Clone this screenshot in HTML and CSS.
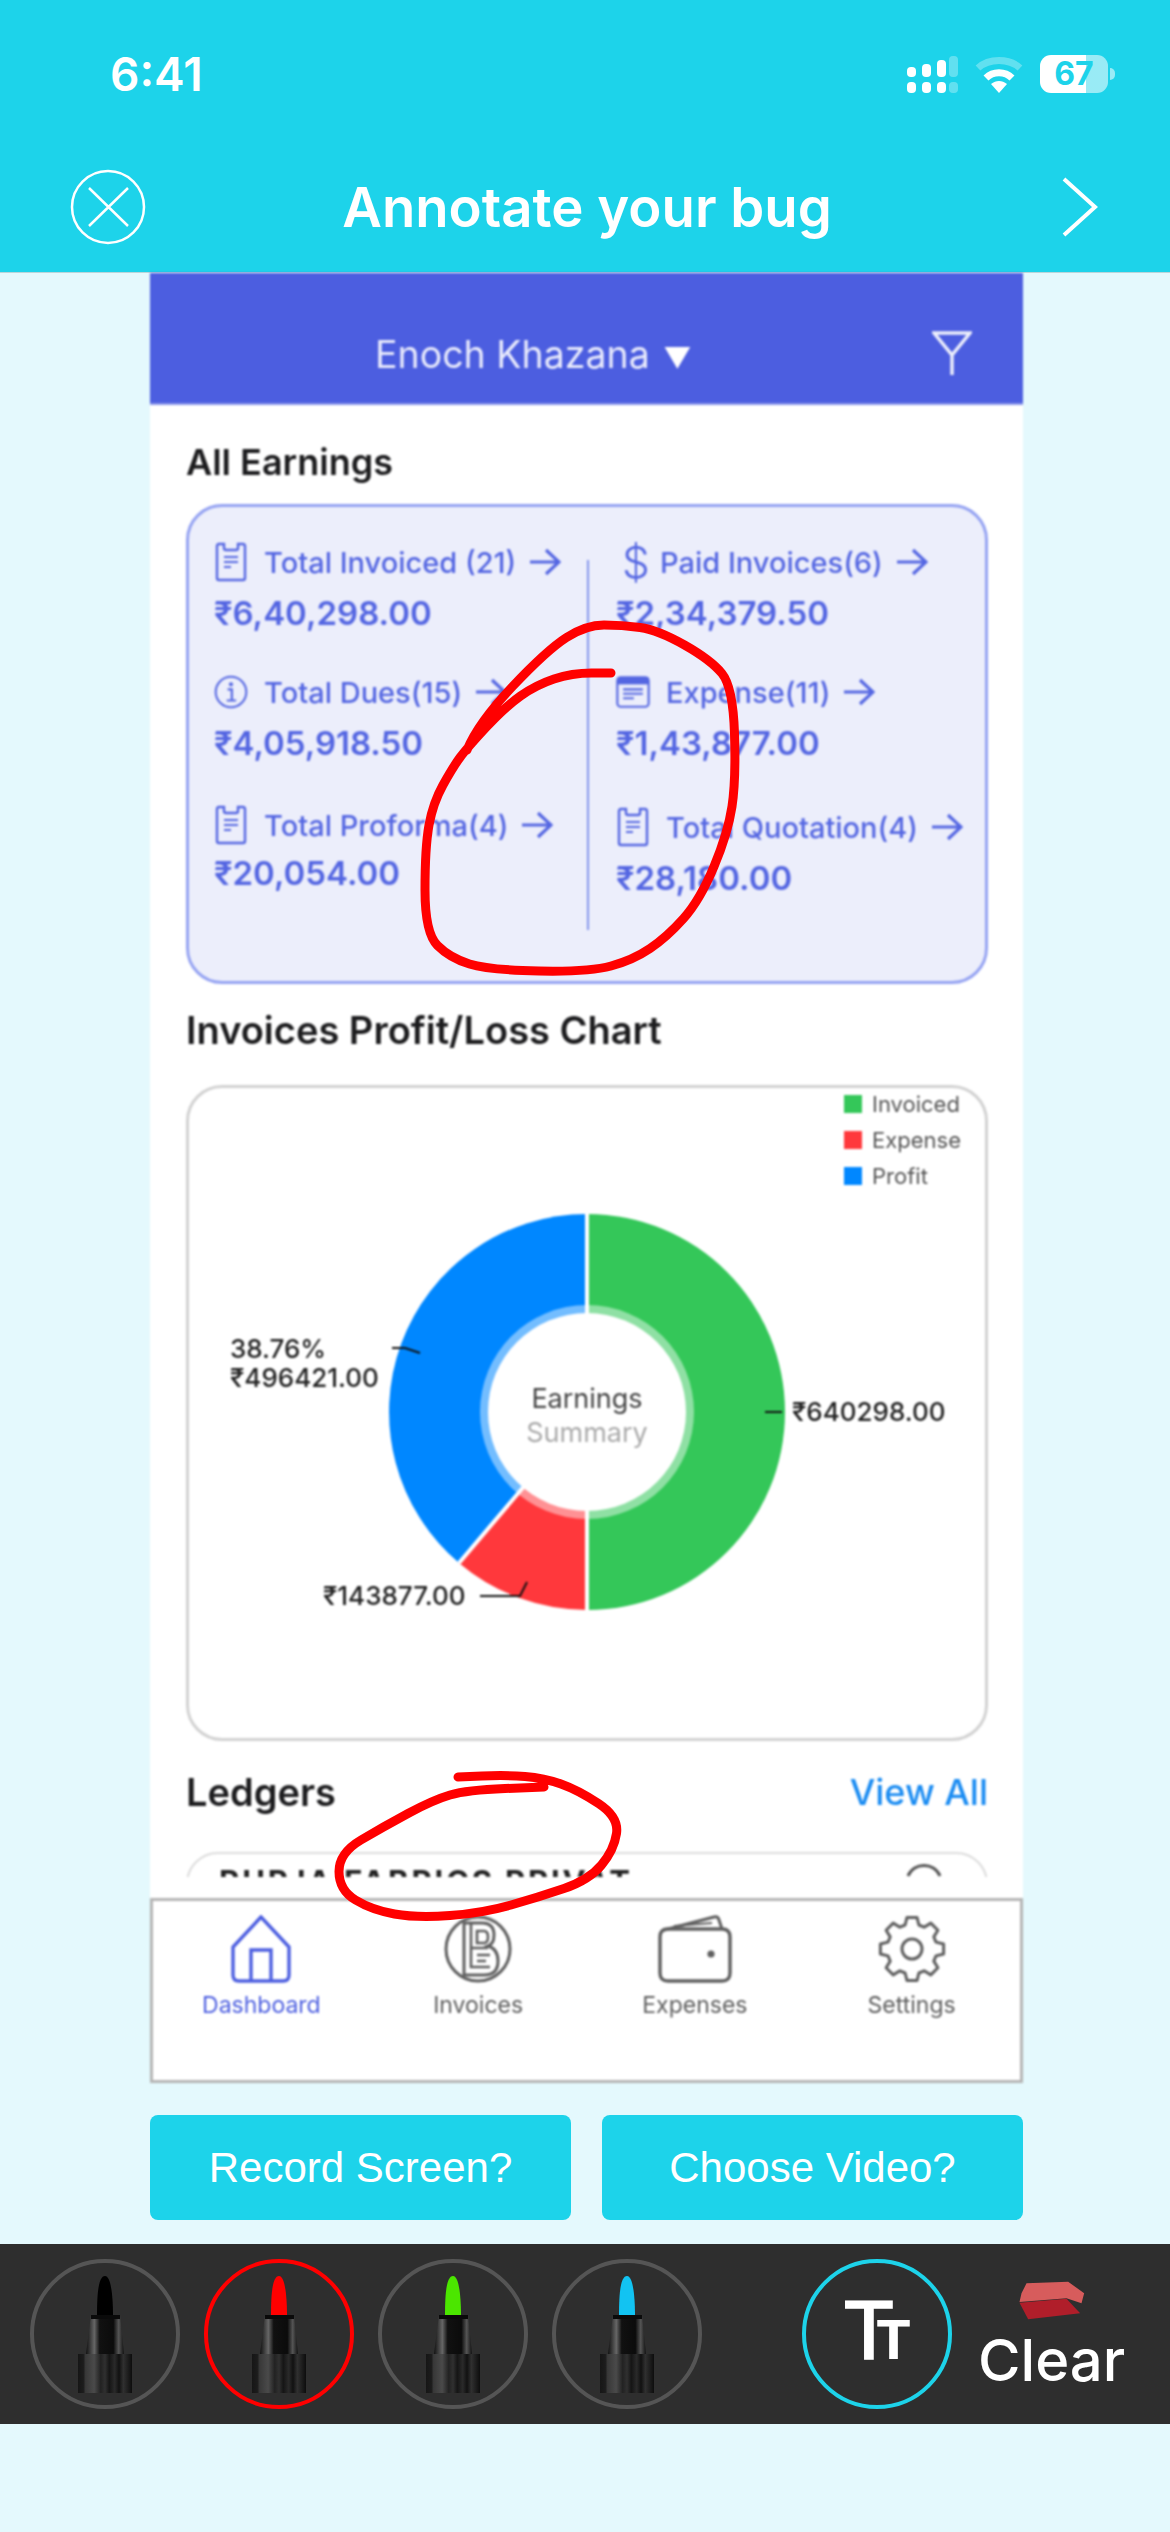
FILE: index.html
```html
<!DOCTYPE html>
<html lang="en">
<head>
  <meta charset="UTF-8">
  <meta name="viewport" content="width=device-width, initial-scale=1.0">
  <title>Annotate your bug</title>
  <link rel="stylesheet" href="styles.css">
</head>
<body>

  <svg width="0" height="0" class="defs">
    <defs>
      <symbol id="clipboard" viewBox="0 0 32 40">
        <path d="M9 2H4Q2 2 2 4V36Q2 38 4 38H28Q30 38 30 36V4Q30 2 28 2H23V6Q23 8 21 8H11Q9 8 9 6Z" fill="none" stroke="currentColor" stroke-width="2.4"/>
        <path d="M9 15H23M9 20H23M9 25H16" fill="none" stroke="currentColor" stroke-width="2"/>
      </symbol>
      <symbol id="arrow" viewBox="0 0 32 28">
        <path d="M1 14H29M17 2L30 14L17 26" fill="none" stroke="currentColor" stroke-width="3.2"/>
      </symbol>
      <linearGradient id="collar" x1="0" x2="1" y1="0" y2="0">
        <stop offset="0" stop-color="#111"/>
        <stop offset=".22" stop-color="#666"/>
        <stop offset=".36" stop-color="#111"/>
        <stop offset=".72" stop-color="#0b0b0b"/>
        <stop offset=".86" stop-color="#555"/>
        <stop offset="1" stop-color="#111"/>
      </linearGradient>
      <linearGradient id="cap" x1="0" x2="1" y1="0" y2="0">
        <stop offset="0" stop-color="#161616"/>
        <stop offset=".1" stop-color="#1c1c1c"/>
        <stop offset=".14" stop-color="#383838"/>
        <stop offset=".3" stop-color="#4a4a4a"/>
        <stop offset=".42" stop-color="#222"/>
        <stop offset=".5" stop-color="#303030"/>
        <stop offset=".58" stop-color="#151515"/>
        <stop offset=".68" stop-color="#2a2a2a"/>
        <stop offset=".76" stop-color="#111"/>
        <stop offset=".84" stop-color="#303030"/>
        <stop offset="1" stop-color="#0d0d0d"/>
      </linearGradient>
      <symbol id="pen" viewBox="0 0 54 117">
        <path d="M19 40C19 20 20 0 27 0C33 0 35 20 35 40Z" fill="currentColor"/>
        <path d="M13 39H42L46 78H8Z" fill="url(#collar)"/>
        <rect x="13" y="39" width="29" height="4" fill="#0a0a0a"/>
        <rect x="0" y="78" width="54" height="39" fill="url(#cap)"/>
      </symbol>
    </defs>
  </svg>

  <header class="top">
    <div class="status">
      <span class="clock">6:41</span>
      <div class="status-icons">
        <svg width="51" height="37" viewBox="0 0 51 37">
          <g fill="#fff">
            <rect x="0" y="11" width="9" height="10" rx="4"/><rect x="15" y="8" width="9" height="13" rx="4"/><rect x="30" y="4" width="9" height="17" rx="4"/>
            <rect x="0" y="26" width="9" height="11" rx="4"/><rect x="15" y="26" width="9" height="11" rx="4"/><rect x="30" y="26" width="9" height="11" rx="4"/>
          </g>
          <g fill="#fff" opacity=".3">
            <rect x="42" y="0" width="9" height="21" rx="4"/><rect x="42" y="26" width="9" height="11" rx="4"/>
          </g>
        </svg>
        <svg width="48" height="37" viewBox="0 0 48 37">
          <path d="M3 12C14 2 34 2 45 12" fill="none" stroke="#fff" stroke-opacity=".3" stroke-width="7"/>
          <path d="M11 22C18 15 30 15 37 22" fill="none" stroke="#fff" stroke-width="7"/>
          <path d="M24 37L16 28C21 24 27 24 32 28Z" fill="#fff"/>
        </svg>
        <div class="battery">67</div>
      </div>
    </div>
    <div class="title-row">
      <svg width="76" height="76" viewBox="0 0 76 76">
        <circle cx="38" cy="38" r="36" fill="none" stroke="#fff" stroke-width="2.5"/>
        <path d="M19 19L58 57M58 19L19 57" fill="none" stroke="#fff" stroke-width="2.5"/>
      </svg>
      <h1>Annotate your bug</h1>
      <svg class="next" width="36" height="60" viewBox="0 0 36 60">
        <path d="M2 2L33 30L2 58" fill="none" stroke="#fff" stroke-width="4"/>
      </svg>
    </div>
  </header>

  <main class="screen">
    <div class="app-bar">
      <span class="account">Enoch Khazana <span class="caret">▼</span></span>
      <svg class="filter" width="40" height="46" viewBox="0 0 40 46">
        <path d="M2 2H38L20 24Z M20 24V44" fill="none" stroke="#fff" stroke-width="3.5" opacity=".9"/>
      </svg>
    </div>

    <div class="scroll">
      <h2 class="section-title first">All Earnings</h2>
      <section class="stats">
        <div class="stat">
          <div class="stat-label"><svg class="stat-icon" viewBox="0 0 32 40"><use href="#clipboard"/></svg>Total Invoiced (21)<svg class="stat-arrow"><use href="#arrow"/></svg></div>
          <div class="stat-value">₹6,40,298.00</div>
        </div>
        <div class="stat">
          <div class="stat-label"><span class="dollar">$</span>Paid Invoices(6)<svg class="stat-arrow"><use href="#arrow"/></svg></div>
          <div class="stat-value">₹2,34,379.50</div>
        </div>
        <div class="stat">
          <div class="stat-label">
            <svg class="stat-icon" viewBox="0 0 40 40">
              <circle cx="20" cy="20" r="18" fill="none" stroke="currentColor" stroke-width="2.4"/>
              <circle cx="20" cy="11" r="2.4" fill="currentColor"/>
              <path d="M16 17H21V29M15 30H26" fill="none" stroke="currentColor" stroke-width="2.6"/>
            </svg>Total Dues(15)<svg class="stat-arrow"><use href="#arrow"/></svg></div>
          <div class="stat-value">₹4,05,918.50</div>
        </div>
        <div class="stat">
          <div class="stat-label">
            <svg class="stat-icon" viewBox="0 0 38 36">
              <rect x="1.5" y="1.5" width="35" height="33" rx="4" fill="none" stroke="currentColor" stroke-width="2.4"/>
              <rect x="1.5" y="1.5" width="35" height="8" fill="currentColor"/>
              <path d="M8 15H30M8 20H30M8 25H20" fill="none" stroke="currentColor" stroke-width="2.4"/>
            </svg>Expense(11)<svg class="stat-arrow"><use href="#arrow"/></svg></div>
          <div class="stat-value">₹1,43,877.00</div>
        </div>
        <div class="stat stat-tight">
          <div class="stat-label"><svg class="stat-icon" viewBox="0 0 32 40"><use href="#clipboard"/></svg>Total Proforma(4)<svg class="stat-arrow"><use href="#arrow"/></svg></div>
          <div class="stat-value">₹20,054.00</div>
        </div>
        <div class="stat stat-low">
          <div class="stat-label"><svg class="stat-icon" viewBox="0 0 32 40"><use href="#clipboard"/></svg>Total Quotation(4)<svg class="stat-arrow"><use href="#arrow"/></svg></div>
          <div class="stat-value">₹28,180.00</div>
        </div>
      </section>

      <h2 class="section-title">Invoices Profit/Loss Chart</h2>
      <section class="chart">
        <ul class="legend">
          <li><i class="swatch swatch-green"></i>Invoiced</li>
          <li><i class="swatch swatch-red"></i>Expense</li>
          <li><i class="swatch swatch-blue"></i>Profit</li>
        </ul>
        <svg class="donut" width="796" height="440" viewBox="189 1195 796 440">
          <path d="M587 1214A198 198 0 0 1 587 1610Z" fill="#34c759"/>
          <path d="M587 1610A198 198 0 0 1 459 1563L587 1412Z" fill="#ff383c"/>
          <path d="M459 1563A198 198 0 0 1 587 1214L587 1412Z" fill="#0087ff"/>
          <path d="M587 1214V1610M587 1412L459 1563" stroke="#fff" stroke-width="4"/>
          <circle cx="587" cy="1412" r="107" fill="#fff" opacity=".45"/>
          <circle cx="587" cy="1412" r="99" fill="#fff"/>
          <path d="M392 1348H405L420 1353M765 1412H782M480 1596H520L527 1582" fill="none" stroke="#111" stroke-width="2"/>
          <text class="slice-label" x="230" y="1358">38.76%</text>
          <text class="slice-label" x="230" y="1387">₹496421.00</text>
          <text class="slice-label" x="792" y="1421">₹640298.00</text>
          <text class="slice-label" x="323" y="1605">₹143877.00</text>
          <text class="donut-main" x="587" y="1408">Earnings</text>
          <text class="donut-sub" x="587" y="1442">Summary</text>
        </svg>
      </section>

      <div class="ledger-head">
        <h2 class="section-title ledger-title">Ledgers</h2>
        <span class="view-all">View All</span>
      </div>
      <section class="ledger-card">
        <span class="ledger-name">RUPJA FABRICS PRIVAT</span>
        <svg width="36" height="20" viewBox="0 0 36 20">
          <path d="M2 18C8 4 28 4 34 18" fill="none" stroke="#555" stroke-width="3"/>
        </svg>
      </section>
    </div>

    <nav class="tabs">
      <div class="tab tab-active">
        <svg width="60" height="68" viewBox="0 0 60 68">
          <path d="M30 2L2 32V60Q2 66 8 66H52Q58 66 58 60V32Z M20 66V35H40V66" fill="none" stroke="currentColor" stroke-width="3.4"/>
        </svg>
        <span>Dashboard</span>
      </div>
      <div class="tab">
        <svg width="68" height="68" viewBox="0 0 68 68">
          <circle cx="34" cy="34" r="32" fill="none" stroke="currentColor" stroke-width="3"/>
          <path d="M20 8H38Q50 8 50 20Q50 29 44 31Q54 34 54 46Q54 60 40 60H20Z" fill="none" stroke="currentColor" stroke-width="3"/>
          <path d="M27 8V52H46M27 33H44M33 40H46M33 46H42M33 16H40Q44 16 44 22Q44 28 40 28H33Z" fill="none" stroke="currentColor" stroke-width="2.6"/>
        </svg>
        <span>Invoices</span>
      </div>
      <div class="tab">
        <svg width="74" height="68" viewBox="0 0 74 68">
          <path d="M2 22Q2 14 10 14H64Q72 14 72 22V58Q72 66 64 66H10Q2 66 2 58Z" fill="none" stroke="currentColor" stroke-width="3.4"/>
          <path d="M6 15L56 2Q60 1 61 5L64 14" fill="none" stroke="currentColor" stroke-width="3"/>
          <path d="M16 11L54 8" fill="none" stroke="currentColor" stroke-width="2"/>
          <circle cx="53" cy="39" r="3.6" fill="currentColor"/>
        </svg>
        <span>Expenses</span>
      </div>
      <div class="tab">
        <svg width="68" height="68" viewBox="-34 -34 68 68">
          <polygon points="-6.9,-24 -5,-31.6 5,-31.6 6.9,-24 12.1,-21.8 18.8,-25.9 25.9,-18.8 21.8,-12.1 24,-6.9 31.6,-5 31.6,5 24,6.9 21.8,12.1 25.9,18.8 18.8,25.9 12.1,21.8 6.9,24 5,31.6 -5,31.6 -6.9,24 -12.1,21.8 -18.8,25.9 -25.9,18.8 -21.8,12.1 -24,6.9 -31.6,5 -31.6,-5 -24,-6.9 -21.8,-12.1 -25.9,-18.8 -18.8,-25.9 -12.1,-21.8" fill="none" stroke="currentColor" stroke-width="3" stroke-linejoin="round"/>
          <circle r="10" fill="none" stroke="currentColor" stroke-width="3"/>
        </svg>
        <span>Settings</span>
      </div>
    </nav>
  </main>

  <div class="actions">
    <button class="action">Record Screen?</button>
    <button class="action">Choose Video?</button>
  </div>

  <div class="toolbar">
    <div class="pen-ring"><svg class="pen pen-black"><use href="#pen"/></svg></div>
    <div class="pen-ring pen-ring-on"><svg class="pen pen-red"><use href="#pen"/></svg></div>
    <div class="pen-ring"><svg class="pen pen-green"><use href="#pen"/></svg></div>
    <div class="pen-ring"><svg class="pen pen-blue"><use href="#pen"/></svg></div>
    <div class="text-ring"><span class="t-big">T</span><span class="t-small">T</span></div>
    <div class="clear">
      <svg width="67" height="40" viewBox="710 120 200 120">
        <path d="M735 130L860 125L908 160L900 190L855 175L714 186L720 160Z" fill="#d75c5c"/>
        <path d="M714 188L855 176L896 220L740 238Z" fill="#b01e2a"/>
      </svg>
      <span>Clear</span>
    </div>
  </div>

  <!-- the red pen marks sit on top of the screenshot -->
  <svg class="marks" width="1170" height="2532" viewBox="0 0 1170 2532">
    <path d="M611 673L591.5 673Q572 673 554 679Q536 685 520.5 696Q505 707 486 727.5Q467 748 460 757.5Q453 767 443 785Q433 803 429 825Q425 847 425 890Q425 933 437.5 945.5Q450 958 469.5 964Q489 970 539 971Q589 972 611 966Q633 960 650 948.5Q667 937 683.5 918.5Q700 900 714 866.5Q728 833 732 806.5Q736 780 734.5 733.5Q733 687 722 673.5Q711 660 684.5 645Q658 630 640 627.5Q622 625 604 625Q586 625 566.5 637.5Q547 650 512.5 686.5Q478 723 467 750"/>
    <path d="M458 1777L482 1776Q506 1775 525 1776.5Q544 1778 561 1784Q578 1790 598.5 1803.5Q619 1817 616.5 1833.5Q614 1850 601.5 1865Q589 1880 564 1888.5Q539 1897 511 1905Q483 1913 450 1915.5Q417 1918 394.5 1914Q372 1910 355.5 1900Q339 1890 339 1871.5Q339 1853 361 1840Q383 1827 408 1813.5Q433 1800 450 1795Q467 1790 505 1788.5L544 1787"/>
  </svg>

</body>
</html>
```

FILE: styles.css
```css
* { box-sizing: border-box; }
html, body { margin: 0; padding: 0; }
body { position: relative; width: 1170px; height: 2532px; overflow: hidden; background: #e4f9fd; font-family: Inter, "Noto Sans", sans-serif; }
h1, h2, ul { margin: 0; padding: 0; }
.defs { display: block; height: 0; }

/* top bar */
.top { height: 273px; padding-top: 55px; background: #1dd3ea; border-bottom: 1px solid #b9d5da; color: #fff; }
.status { display: flex; justify-content: space-between; align-items: center; height: 38px; padding: 0 62px 0 110px; }
.clock { font-size: 46px; font-weight: 600; }
.status-icons { display: flex; align-items: center; gap: 17px; }
.battery { position: relative; width: 68px; height: 38px; border-radius: 11px; background: linear-gradient(90deg, #fff 46px, rgba(255,255,255,0.55) 46px); color: #1dd3ea; font-size: 32px; font-weight: 700; line-height: 38px; text-align: center; }
.battery::after { content: ""; position: absolute; left: 70px; top: 13px; width: 5px; height: 12px; border-radius: 0 6px 6px 0; background: rgba(255,255,255,0.55); }
.title-row { display: grid; grid-template-columns: 76px 1fr 76px; align-items: center; height: 133px; margin-top: 47px; padding: 0 72px 0 70px; }
.next { justify-self: end; }
h1 { padding-left: 6px; font-size: 54.5px; font-weight: 600; text-align: center; }

/* embedded app screen */
.screen { width: 873px; height: 1810px; margin-left: 150px; background: #fff; filter: blur(1px); }
.app-bar { display: flex; align-items: center; justify-content: space-between; height: 132px; padding: 32px 51px 0 225px; background: #4c5ee0; border-bottom: 2px solid #8b97ea; color: #e8eafc; }
.account { font-size: 37.5px; }
.caret { margin-left: 3px; font-size: 28px; color: #fff; }
.scroll { height: 1472px; padding: 0 35px 0 36px; overflow: hidden; }
.section-title { height: 50px; margin-top: 21px; font-size: 38px; font-weight: 600; line-height: 50px; color: #1c1c1e; }
.section-title.first { margin-top: 32px; font-size: 36px; }

.stats { display: grid; grid-template-columns: 402px 1fr; grid-template-rows: 130px 133px 1fr; height: 480px; margin-top: 17px; padding: 33px 0 0 25px; border: 3px solid #95a3f2; border-radius: 36px; background: #eceefb linear-gradient(#8495ec, #8495ec) no-repeat 398px 53px / 2px 370px; color: #5466e2; }
.stat-label { display: flex; align-items: center; gap: 16px; height: 44px; font-size: 29px; font-weight: 500; white-space: nowrap; }
.stat-icon { flex: none; width: 34px; height: 40px; }
.stat-arrow { flex: none; width: 32px; height: 28px; margin-left: -3px; }
.dollar { width: 40px; margin-right: -12px; padding-left: 6px; font-size: 44px; font-weight: 300; }
.stat-value { margin-top: 10px; font-size: 33px; font-weight: 600; line-height: 38px; }
.stat-tight .stat-value { margin-top: 7px; }
.stat-low { margin-top: 2px; }

.chart { display: flex; flex-direction: column; height: 656px; margin-top: 30px; border: 3px solid #d2d2d2; border-radius: 36px; }
.legend { display: flex; flex-direction: column; gap: 4px; align-self: flex-end; width: 141px; list-style: none; font-size: 22px; color: #555; }
.legend li { display: flex; align-items: center; gap: 10px; height: 32px; }
.swatch { width: 18px; height: 18px; }
.swatch-green { background: #34c759; }
.swatch-red { background: #ff383c; }
.swatch-blue { background: #0087ff; }
.donut { display: block; margin-top: 3px; }
.slice-label { font-size: 26px; font-weight: 500; fill: #222; }
.donut-main { font-size: 27px; text-anchor: middle; fill: #444; }
.donut-sub { font-size: 27px; text-anchor: middle; fill: #aaa; }

.ledger-head { display: flex; justify-content: space-between; align-items: center; margin-top: 26px; }
.ledger-title { margin-top: 0; }
.view-all { font-size: 36px; font-weight: 500; color: #1b8cf2; }
.ledger-card { display: flex; justify-content: space-between; height: 100px; margin-top: 35px; padding: 9px 44px 0 31px; border: 2px solid #dcdcdc; border-radius: 32px; }
.ledger-card svg { margin-top: -5px; }
.ledger-name { font-size: 31px; font-weight: 700; letter-spacing: 2.8px; color: #222; }

.tabs { display: grid; grid-template-columns: repeat(4, 1fr); height: 185px; margin-top: 21px; padding-top: 14px; border: 3px solid #b5b5b5; color: #5f5f5f; }
.tab { display: flex; flex-direction: column; align-items: center; gap: 7px; }
.tab span { font-size: 23px; line-height: 30px; }
.tab-active { color: #4c5ee0; }

/* buttons under the screen */
.actions { display: grid; grid-template-columns: 421px 421px; gap: 31px; margin: 32px 0 0 150px; }
.action { height: 105px; border: none; border-radius: 8px; background: #1dd3ea; color: #fff; font-family: "Liberation Sans", sans-serif; font-size: 42px; }

/* pen toolbar */
.toolbar { display: flex; align-items: center; height: 180px; margin-top: 24px; padding-left: 30px; background: #2e2e2e; }
.pen-ring, .text-ring { display: flex; justify-content: center; align-items: center; flex: none; width: 150px; height: 150px; border-radius: 50%; }
.pen-ring { margin-right: 24px; border: 4px solid #555; }
.pen-ring-on { border-color: #ff0000; }
.pen { width: 54px; height: 117px; }
.pen-black { color: #000; }
.pen-red { color: #ff0000; }
.pen-green { color: #4be600; }
.pen-blue { color: #12c3f2; }
.text-ring { align-items: baseline; margin-left: 76px; padding-top: 28px; border: 4px solid #1dd3ea; color: #fff; font-family: "Liberation Mono", monospace; line-height: 90px; }
.t-big { font-size: 88px; -webkit-text-stroke: 1.5px #fff; }
.t-small { margin-left: -20px; font-size: 60px; font-weight: 700; }
.clear { display: flex; flex-direction: column; align-items: flex-start; align-self: flex-start; margin-left: 26px; padding-top: 36px; color: #fff; font-size: 58px; font-weight: 500; line-height: 60px; }
.clear svg { margin-left: 40px; margin-bottom: 10px; }

/* annotation strokes */
.marks { position: absolute; left: 0; top: 0; pointer-events: none; }
.marks path { fill: none; stroke: #ff0000; stroke-width: 9; stroke-linejoin: round; stroke-linecap: round; }
```
